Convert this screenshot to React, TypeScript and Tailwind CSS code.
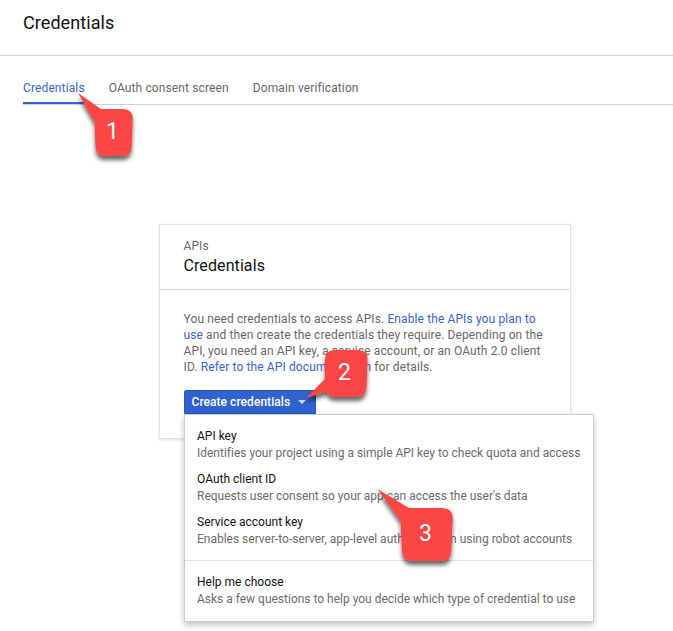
import React from "react";

const tabs = ["Credentials", "OAuth consent screen", "Domain verification"];

const options = [
  { title: "API key", text: "Identifies your project using a simple API key to check quota and access" },
  { title: "OAuth client ID", text: "Requests user consent so your app can access the user's data" },
  { title: "Service account key", text: "Enables server-to-server, app-level authentication using robot accounts" },
];

function Option({ title, text }: { title: string; text: string }) {
  return (
    <div className="h-[43px] whitespace-nowrap leading-[17px]">
      <div className="text-[#111]">{title}</div>
      <div className="tracking-[-0.007px] text-[#6c6c6c]">{text}</div>
    </div>
  );
}

function Callouts() {
  return (
    <svg
      className="pointer-events-none absolute left-0 top-0 [font-family:Roboto,sans-serif]"
      width="673"
      height="631"
      viewBox="0 0 673 631"
    >
      <defs>
        <filter id="shadow" x="-30%" y="-30%" width="160%" height="160%">
          <feDropShadow dx="0" dy="4" stdDeviation="2.2" floodColor="#000" floodOpacity="0.6" />
        </filter>
      </defs>
      <g fill="#fc4444" filter="url(#shadow)">
        <path d="M78 93L101 109H123Q133 109 132.700 119L131.700 147Q131 156 122 156H105Q96 156 95.500 147L94.500 122Z" />
      </g>
      <g fill="#fc4444" filter="url(#shadow)">
        <path d="M306 398L325 379V360Q325 350 335 350H358Q368 350 367.500 360L366.500 387Q366 397 356 397H337Q329 397 326.500 391.500Z" />
      </g>
      <g fill="#fc4444" filter="url(#shadow)">
        <path d="M377.500 489L409 508H442Q453 508 452.700 519L451.300 551Q451 561 441 561H413Q402.500 561 402 551L400.500 521Z" />
      </g>
      <g fill="#fff" fontSize="23" textAnchor="middle">
        <text x="112.500" y="139">1</text>
        <text x="344.500" y="380">2</text>
        <text x="425.500" y="541">3</text>
      </g>
    </svg>
  );
}

export default function App() {
  return (
    <div className="relative h-[631px] w-[673px] overflow-hidden bg-white text-xs text-[#686868] [font-family:Roboto,sans-serif]">
      <header className="h-14 border-b border-[#d0d0d0] pl-[23px] pt-[9px] text-lg leading-7 tracking-[0.07px] text-[#111]">
        Credentials
      </header>
      <nav className="ml-[23px] flex h-[49px] gap-6 border-b border-[#d0d0d0] tracking-[0.12px]">
        {tabs.map((tab, i) => (
          <div
            key={tab}
            className={
              i === 0
                ? "h-12 border-b-2 border-[#3367d6] pt-6 leading-4 text-[#3b62d4]"
                : "h-12 pt-6 leading-4"
            }
          >
            {tab}
          </div>
        ))}
      </nav>

      <main className="ml-[159px] mt-[119px] h-[215px] w-[412px] border border-[#e2e2e2] bg-white shadow-[0_1px_3px_rgba(0,0,0,0.12)]">
        <div className="mr-px h-[65px] border-b border-[#d0d0d0] pl-[23.5px] pt-[13px]">
          <div className="leading-4 tracking-[0.1px]">APIs</div>
          <div className="mt-px text-base leading-[22px] tracking-[0.09px] text-[#111]">Credentials</div>
        </div>
        <div className="pl-6 pt-[21px]">
          <p className="-ml-[0.5px] whitespace-nowrap leading-4 tracking-[0.115px]">
            You need credentials to access APIs. <a className="text-[#3b62d4]">Enable the APIs you plan to</a>
            <br />
            <a className="text-[#3b62d4]">use</a> and then create the credentials they require. Depending on the
            <br />
            API, you need an API key, a service account, or an OAuth 2.0 client
            <br />
            ID. <a className="text-[#3b62d4]">Refer to the API documentation</a> for details.
          </p>
          <div className="relative mt-[15px]">
            <button className="flex h-6 w-[132px] items-center rounded-t-[2px] border border-[#2456c4] bg-[#3062d0] pl-[6.5px] font-medium tracking-[0.05px] text-white">
              Create credentials
              <span className="ml-[7.5px] h-0 w-0 border-x-4 border-t-4 border-x-transparent border-t-[#cbd8f5]" />
            </button>
            <div className="absolute left-0 top-6 h-[208px] w-[410px] border border-[#cbcbcb] bg-white shadow-[0_3px_6px_rgba(0,0,0,0.24)]">
              <div className="h-[146px] border-b border-[#e2e2e2] pl-3 pt-[13px]">
                {options.map((option) => (
                  <Option key={option.title} {...option} />
                ))}
              </div>
              <div className="pl-3 pt-[13px]">
                <Option
                  title="Help me choose"
                  text="Asks a few questions to help you decide which type of credential to use"
                />
              </div>
            </div>
          </div>
        </div>
      </main>
      <Callouts />
    </div>
  );
}
